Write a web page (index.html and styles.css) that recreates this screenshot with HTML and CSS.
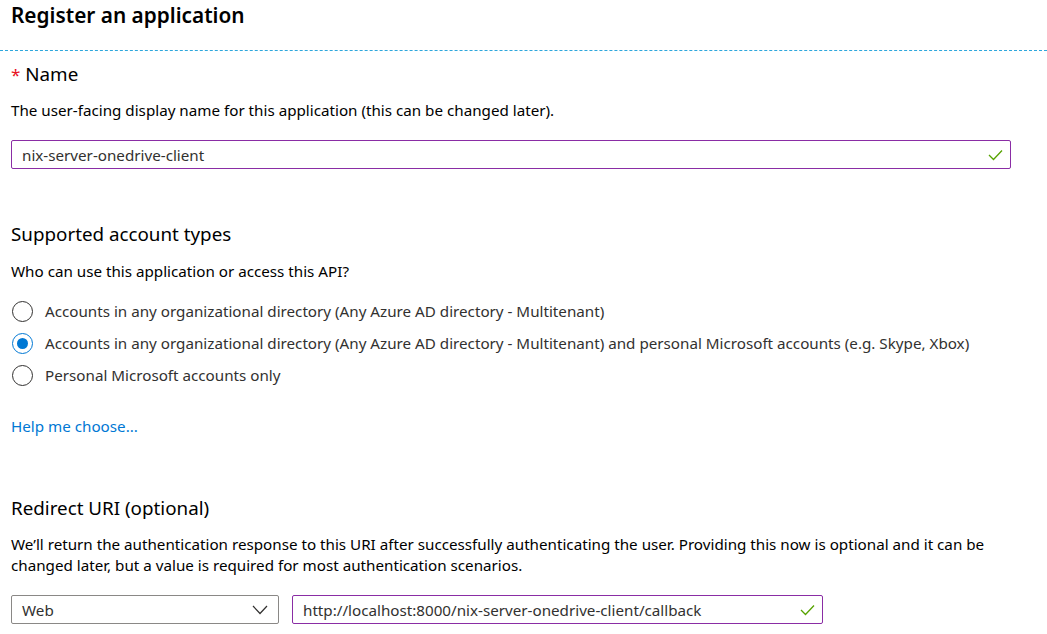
FILE: index.html
```html
<!DOCTYPE html>
<html lang="en">
<head>
<meta charset="utf-8">
<title>Register an application</title>
<link rel="stylesheet" href="styles.css">
</head>
<body>
<div class="page">
  <header class="head">
    <h1 class="title">Register an application</h1>
  </header>
  <main class="content">
    <section class="section name-section">
      <h2 class="label"><span class="req">*</span> Name</h2>
      <p class="desc">The user-facing display name for this application (this can be changed later).</p>
      <div class="field valid wide">
        <span class="field-text">nix-server-onedrive-client</span>
        <svg class="check" width="15" height="12" viewBox="0 0 15 12"><path d="M1 6 L5.5 10.5 L14 1.5" fill="none" stroke="#57a300" stroke-width="1.3"/></svg>
      </div>
    </section>

    <section class="section types-section">
      <h2 class="label">Supported account types</h2>
      <p class="desc">Who can use this application or access this API?</p>
      <div class="radios">
        <div class="radio-row"><span class="radio"></span><span class="radio-text">Accounts in any organizational directory (Any Azure AD directory - Multitenant)</span></div>
        <div class="radio-row"><span class="radio checked"></span><span class="radio-text">Accounts in any organizational directory (Any Azure AD directory - Multitenant) and personal Microsoft accounts (e.g. Skype, Xbox)</span></div>
        <div class="radio-row"><span class="radio"></span><span class="radio-text">Personal Microsoft accounts only</span></div>
      </div>
      <a class="help" href="#">Help me choose...</a>
    </section>

    <section class="section redirect-section">
      <h2 class="label">Redirect URI (optional)</h2>
      <p class="desc para">We’ll return the authentication response to this URI after successfully authenticating the user. Providing this now is optional and it can be changed later, but a value is required for most authentication scenarios.</p>
      <div class="uri-row">
        <div class="select">
          <span class="field-text">Web</span>
          <svg class="chev" width="16" height="10" viewBox="0 0 16 10"><path d="M1 1 L8 8.5 L15 1" fill="none" stroke="#323130" stroke-width="1.2"/></svg>
        </div>
        <div class="field valid url">
          <span class="field-text">http://localhost:8000/nix-server-onedrive-client/callback</span>
          <svg class="check" width="15" height="12" viewBox="0 0 15 12"><path d="M1 6 L5.5 10.5 L14 1.5" fill="none" stroke="#57a300" stroke-width="1.3"/></svg>
        </div>
      </div>
    </section>
  </main>
</div>
</body>
</html>
```

FILE: styles.css
```css
* { box-sizing: border-box; }
html, body { margin: 0; padding: 0; background: #fff; }
body {
  font-family: "Segoe UI", "Noto Sans", "Open Sans", sans-serif;
  color: #323130;
  font-size: 15.2px;
  width: 1047px;
  height: 634px;
  overflow: hidden;
}
.page { display: flex; flex-direction: column; }
.head {
  height: 51px;
  border-bottom: 1px dashed #2ea7dc;
  padding: 1px 11px 0;
}
.title {
  margin: 0;
  font-size: 20.8px;
  font-weight: 600;
  line-height: 28px;
  color: #000;
}
.content { padding: 0 11px; width: 1021px; }
.section { display: flex; flex-direction: column; align-items: flex-start; }
.label {
  margin: 0;
  font-size: 18.8px;
  font-weight: 400;
  line-height: 24px;
  color: #000;
}
.req { color: #e81123; font-size: 17px; }
.desc { margin: 0; line-height: 20px; color: #000; }
.name-section { padding-top: 11px; }
.name-section .desc { margin-top: 13px; }
.field {
  display: flex;
  align-items: center;
  justify-content: space-between;
  height: 29px;
  border: 1px solid #8a2da5;
  border-radius: 2px;
  padding: 0 7px 0 10px;
  color: #323130;
}
.name-section .field { margin-top: 20px; }
.wide { width: 1000px; }
.field-text { line-height: 20px; }
.types-section { padding-top: 53px; }
.types-section .desc { margin-top: 15px; }
.radios { margin-top: 20px; display: flex; flex-direction: column; gap: 12px; }
.radio-row { display: flex; align-items: center; gap: 12px; height: 20px; }
.radio {
  width: 21px; height: 21px;
  border: 1px solid #323130;
  border-radius: 50%;
  margin-left: 1px;
  display: flex; align-items: center; justify-content: center;
}
.radio.checked { border-color: #0078d4; }
.radio.checked::after {
  content: "";
  width: 11px; height: 11px; border-radius: 50%;
  background: #0078d4;
}
.radio-text { line-height: 20px; color: #323130; }
.help { margin-top: 31px; color: #0078d4; text-decoration: none; line-height: 20px; }
.redirect-section { padding-top: 60px; }
.redirect-section .desc { margin-top: 14px; line-height: 21px; }
.uri-row { display: flex; gap: 13px; margin-top: 19px; }
.select {
  width: 268px; height: 29px;
  border: 1px solid #8a8886;
  border-radius: 2px;
  display: flex; align-items: center; justify-content: space-between;
  padding: 0 10px 0 10px;
}
.url { width: 531px; }
.check { display: block; }
.chev { display: block; }
```
